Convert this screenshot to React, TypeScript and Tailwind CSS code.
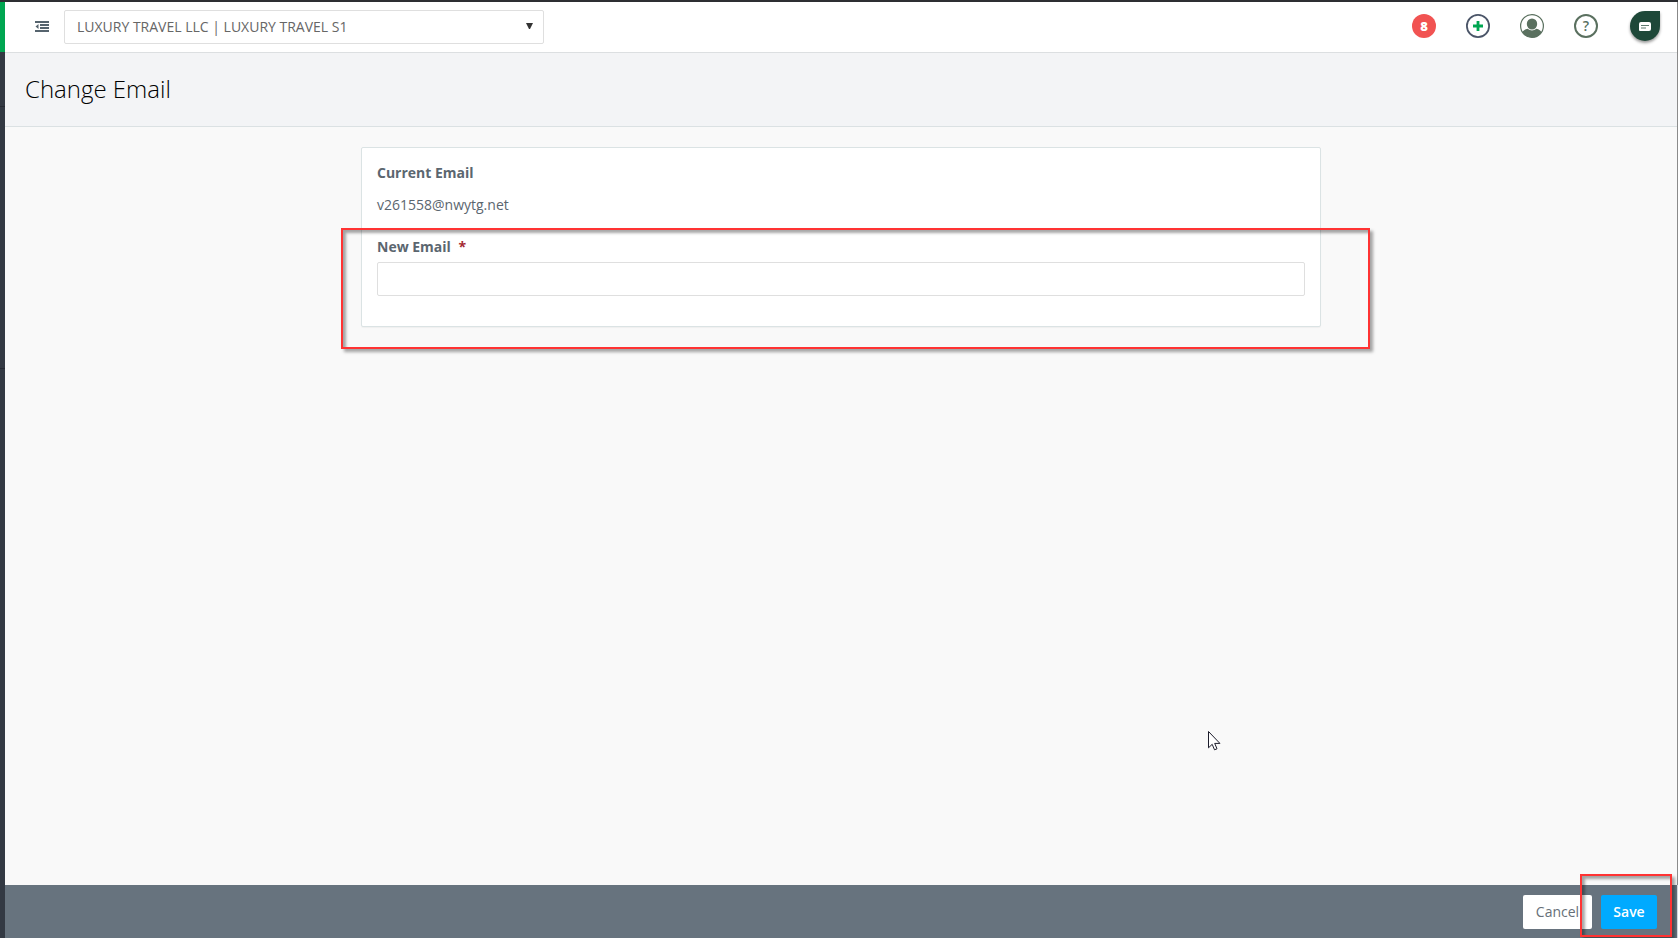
import React, { useState } from "react";

const accounts = ["LUXURY TRAVEL LLC | LUXURY TRAVEL S1"];

const Header = () => {
  const [account, setAccount] = useState(accounts[0]);
  return (
    <header className="flex h-[51px] items-center justify-between border-b border-[#dcdfe1] bg-white pr-[17px] pl-[30px] shadow-[0_1px_2px_rgba(0,0,0,0.06)]">
      <div className="flex items-center">
        <button type="button" aria-label="Collapse menu" className="mr-[15px] pb-0.5">
          <svg width="14" height="11" viewBox="0 0 14 11" fill="#56646e">
            <path d="M0 0h14v2H0zM5 3h9v2H5zM5 6h9v2H5zM0 9h14v2H0zM3.500 3v5L.5 5.500z" />
          </svg>
        </button>
        <div className="relative">
          <select
            aria-label="Account"
            value={account}
            onChange={(e) => setAccount(e.target.value)}
            className="h-[34px] w-[480px] appearance-none rounded-xs border border-[#dfdfdf] bg-white pl-3 text-sm text-[#666] outline-none"
          >
            {accounts.map((name) => (
              <option key={name}>{name}</option>
            ))}
          </select>
          <svg
            className="pointer-events-none absolute top-[13px] right-[11px]"
            width="7"
            height="6"
            viewBox="0 0 7 6"
            fill="#333"
          >
            <path d="M0 0h7L4 6H3z" />
          </svg>
        </div>
      </div>
      <div className="flex items-center pb-0.5">
        <button
          type="button"
          aria-label="8 notifications"
          className="flex size-6 items-center justify-center rounded-full bg-[#f15352] text-[13px] font-extrabold text-white"
        >
          8
        </button>
        <button type="button" aria-label="Add" className="ml-[30px]">
          <svg width="24" height="24" viewBox="0 0 24 24">
            <circle cx="12" cy="12" r="11.100" fill="#fff" stroke="#4b5568" strokeWidth="1.800" />
            <path d="M12 7v10M7 12h10" stroke="#00a651" strokeWidth="2.800" />
          </svg>
        </button>
        <button type="button" aria-label="Profile" className="ml-[30px]">
          <svg width="24" height="24" viewBox="0 0 24 24">
            <clipPath id="avatar">
              <circle cx="12" cy="12" r="11.500" />
            </clipPath>
            <circle cx="12" cy="12" r="11.400" fill="#fff" stroke="#5a705f" strokeWidth="1.200" />
            <g fill="#5a705f" clipPath="url(#avatar)">
              <ellipse cx="12" cy="10" rx="5.200" ry="5.500" />
              <path d="M1.500 20c.8-3 3.500-4.800 6.300-5.200 2.500 2.200 5.900 2.200 8.400 0 2.800.4 5.500 2.200 6.300 5.200L18 24H6z" />
            </g>
          </svg>
        </button>
        <button
          type="button"
          aria-label="Help"
          className="ml-[30px] flex size-6 items-center justify-center rounded-full border-2 border-[#5a705f] text-sm font-semibold text-[#5a705f]"
        >
          ?
        </button>
        <button
          type="button"
          aria-label="Chat"
          className="ml-8 flex size-[30px] items-center justify-center rounded-full rounded-tr-[3px] bg-[#1e4839] shadow-[0_2px_3px_rgba(0,0,0,0.4)]"
        >
          <svg width="12" height="9" viewBox="0 0 12 9">
            <path
              d="M2 0h8a2 2 0 0 1 2 2v5a2 2 0 0 1-2 2H1a1 1 0 0 1-1-1V2a2 2 0 0 1 2-2z"
              fill="#fff"
            />
            <path d="M2 3.500h8M2 6h5" stroke="#5d7a6f" />
          </svg>
        </button>
      </div>
    </header>
  );
};

const Cursor = () => (
  <svg
    className="pointer-events-none absolute top-[729px] left-[1208px]"
    width="13"
    height="20"
    viewBox="0 0 13 20"
  >
    <path
      d="M.5.500v16.300l3.700-3.500 2.300 5.500 2.500-1-2.300-5.400h5.200z"
      fill="#fff"
      stroke="#1c1c2b"
    />
  </svg>
);

const App = () => {
  const [email, setEmail] = useState("");
  return (
    <div className="relative flex min-h-screen flex-col border-t-2 border-[#2e2f33] bg-[#f9f9f9] font-['Open_Sans',sans-serif] text-sm text-[#5b666f]">
      <div className="flex flex-1">
        <aside className="flex w-[5px] flex-col bg-[#333943]">
          <div className="h-[50px] bg-[#00a651]" />
          <div className="h-[55px] border-b border-[#262a33]" />
          <div className="h-[262px] border-b border-[#262a33]" />
        </aside>
        <form
          className="flex min-w-0 flex-1 flex-col"
          onSubmit={(e) => e.preventDefault()}
        >
          <div className="flex flex-1 flex-col border-r border-[#8b8b8b]">
            <Header />
            <div className="flex h-[74px] items-center border-b border-[#dbe1e3] bg-[#f3f4f6] px-5 pb-0.5">
              <h1 className="text-2xl font-light text-black">Change Email</h1>
            </div>
            <main className="flex-1 pt-5">
              <div className="relative mx-auto max-w-[960px] rounded-xs border border-[#dbe3e4] bg-white px-[15px] pt-[15px] pb-[30px] shadow-[0_1px_1px_rgba(0,0,0,0.04)]">
                <p className="leading-5 font-bold">Current Email</p>
                <p className="mt-3 leading-5">v261558@nwytg.net</p>
                <label htmlFor="new-email" className="mt-[22px] block leading-5 font-bold">
                  New Email <span className="ml-1 text-[#a52a33]">*</span>
                </label>
                <input
                  id="new-email"
                  type="email"
                  required
                  value={email}
                  onChange={(e) => setEmail(e.target.value)}
                  className="mt-[5px] block h-[34px] w-full rounded-xs border border-[#dfdfdf] bg-white px-3 outline-none"
                />
                <div className="pointer-events-none absolute top-[80px] -right-[50px] -bottom-[23px] -left-[21px] border-2 border-[#ff3333] shadow-[3px_3px_3px_rgba(0,0,0,0.35),inset_3px_3px_3px_rgba(0,0,0,0.35)]" />
              </div>
            </main>
          </div>
          <footer className="flex h-[53px] items-center justify-end gap-[9px] border-r border-[#d5dadf] bg-[#67737e] pr-5">
            <button
              type="button"
              className="h-[34px] w-[69px] rounded-xs bg-white text-[#666f78]"
            >
              Cancel
            </button>
            <div className="relative">
              <button
                type="submit"
                className="h-[34px] w-14 rounded-xs bg-[#00aaff] font-semibold text-white"
              >
                Save
              </button>
              <div className="pointer-events-none absolute -top-[21px] -right-[15px] -bottom-[8px] -left-[21px] border-2 border-[#ff3333] shadow-[3px_3px_3px_rgba(0,0,0,0.35),inset_3px_3px_3px_rgba(0,0,0,0.35)]" />
            </div>
          </footer>
        </form>
      </div>
      <Cursor />
    </div>
  );
};

export default App;
